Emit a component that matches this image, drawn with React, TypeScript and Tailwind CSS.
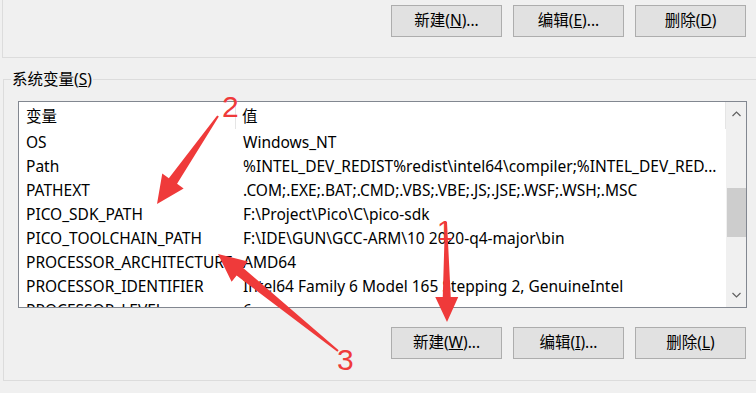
import React from 'react';

const rows: [string, string][] = [
  ['OS', 'Windows_NT'],
  ['Path', '%INTEL_DEV_REDIST%redist\\intel64\\compiler;%INTEL_DEV_RED...'],
  ['PATHEXT', '.COM;.EXE;.BAT;.CMD;.VBS;.VBE;.JS;.JSE;.WSF;.WSH;.MSC'],
  ['PICO_SDK_PATH', 'F:\\Project\\Pico\\C\\pico-sdk'],
  ['PICO_TOOLCHAIN_PATH', 'F:\\IDE\\GUN\\GCC-ARM\\10 2020-q4-major\\bin'],
  ['PROCESSOR_ARCHITECTURE', 'AMD64'],
  ['PROCESSOR_IDENTIFIER', 'Intel64 Family 6 Model 165 Stepping 2, GenuineIntel'],
  ['PROCESSOR_LEVEL', '6'],
];

const font = { fontFamily: '"Noto Sans", "Noto Sans CJK SC", sans-serif' };

function WinButton({ label, hotkey, dots }: { label: string; hotkey: string; dots?: boolean }) {
  return (
    <button className="w-[111px] h-[32px] bg-[#e1e1e1] border border-[#adadad] text-[15.5px] text-black flex items-center justify-center">
      {label}(<span className="underline">{hotkey}</span>){dots ? '...' : ''}
    </button>
  );
}

// tapered callout arrow, drawn from tail to tip
function arrowPoints(tx: number, ty: number, px: number, py: number, headLen: number, headHalf: number, neckHalf: number) {
  const dx = px - tx;
  const dy = py - ty;
  const len = Math.hypot(dx, dy);
  const ux = dx / len;
  const uy = dy / len;
  const nx = -uy;
  const ny = ux;
  const bx = px - ux * headLen;
  const by = py - uy * headLen;
  const pts = [
    [tx + nx * 1, ty + ny * 1],
    [bx + nx * neckHalf, by + ny * neckHalf],
    [bx + nx * headHalf, by + ny * headHalf],
    [px, py],
    [bx - nx * headHalf, by - ny * headHalf],
    [bx - nx * neckHalf, by - ny * neckHalf],
    [tx - nx * 1, ty - ny * 1],
  ];
  return pts.map(p => p.join(',')).join(' ');
}

export default function App() {
  return (
    <div className="relative w-[756px] h-[393px] bg-[#f0f0f0] overflow-hidden" style={font}>
      {/* user variables group (bottom part) */}
      <div className="ml-[2px] h-[58px] border-l border-b border-[#dcdcdc] flex justify-end items-start pt-[5px] pr-[10px] gap-[11px]">
        <WinButton label="新建" hotkey="N" dots />
        <WinButton label="编辑" hotkey="E" dots />
        <WinButton label="删除" hotkey="D" />
      </div>

      {/* system variables group */}
      <div className="relative ml-[3px] mt-[21px] h-[302px] border-l border-t border-b border-[#dcdcdc]">
        <span className="absolute left-[7px] top-[-11px] bg-[#f0f0f0] px-[1px] text-[15.5px] leading-[20px] text-black">
          系统变量(<span className="underline">S</span>)
        </span>

        <div className="ml-[14px] mt-[21px] mr-[9px] h-[207px] border border-[#828790] bg-white flex overflow-hidden">
          <div className="flex-1 flex flex-col overflow-hidden">
            <div className="flex h-[27px] shrink-0 items-center text-[15.5px] text-black">
              <div className="w-[217px] pl-[7px] pt-[2px] h-full flex items-center border-r border-[#e5e5e5]">变量</div>
              <div className="pl-[6px] pt-[2px] flex-1 h-full flex items-center border-r border-[#e5e5e5]">值</div>
            </div>
            {rows.map(([k, v]) => (
              <div key={k} className="flex h-[24px] shrink-0 items-center pt-[3px] text-[15.5px] text-black whitespace-nowrap">
                <div className="w-[217px] pl-[7px] overflow-hidden">{k}</div>
                <div className="pl-[7px] flex-1 overflow-hidden">{v}</div>
              </div>
            ))}
          </div>
          {/* scrollbar */}
          <div className="w-[20px] bg-[#f0f0f0] flex flex-col items-center shrink-0">
            <div className="h-[24px] flex items-center justify-center">
              <svg width="9" height="6" viewBox="0 0 9 6"><path d="M0.5 5 L4.5 1 L8.5 5" fill="none" stroke="#606060" strokeWidth="1.2" /></svg>
            </div>
            <div className="h-[62px]" />
            <div className="w-[19px] h-[49px] bg-[#cdcdcd]" />
            <div className="flex-1" />
            <div className="h-[24px] flex items-center justify-center">
              <svg width="9" height="6" viewBox="0 0 9 6"><path d="M0.5 1 L4.5 5 L8.5 1" fill="none" stroke="#606060" strokeWidth="1.2" /></svg>
            </div>
          </div>
        </div>

        <div className="flex justify-end gap-[11px] mt-[19px] pr-[10px]">
          <WinButton label="新建" hotkey="W" dots />
          <WinButton label="编辑" hotkey="I" dots />
          <WinButton label="删除" hotkey="L" />
        </div>
      </div>

      {/* annotation arrows */}
      <svg className="absolute inset-0 pointer-events-none" width="756" height="393" viewBox="0 0 756 393">
        <polygon points={arrowPoints(218, 116, 157, 204, 28, 13, 5)} fill="#ef3a3a" />
        <polygon points={arrowPoints(338, 351, 218, 254, 28, 13, 5)} fill="#ef3a3a" />
        <polygon points={arrowPoints(446, 222, 447, 322, 25, 11.5, 4)} fill="#ef3a3a" />
        <text x="222" y="117" fontSize="30" fill="#ef3a3a" fontFamily="Liberation Sans, sans-serif">2</text>
        <text x="437" y="240" fontSize="28" fill="#ef3a3a" fontFamily="Liberation Sans, sans-serif">1</text>
        <text x="337" y="370" fontSize="30" fill="#ef3a3a" fontFamily="Liberation Sans, sans-serif">3</text>
      </svg>
    </div>
  );
}
